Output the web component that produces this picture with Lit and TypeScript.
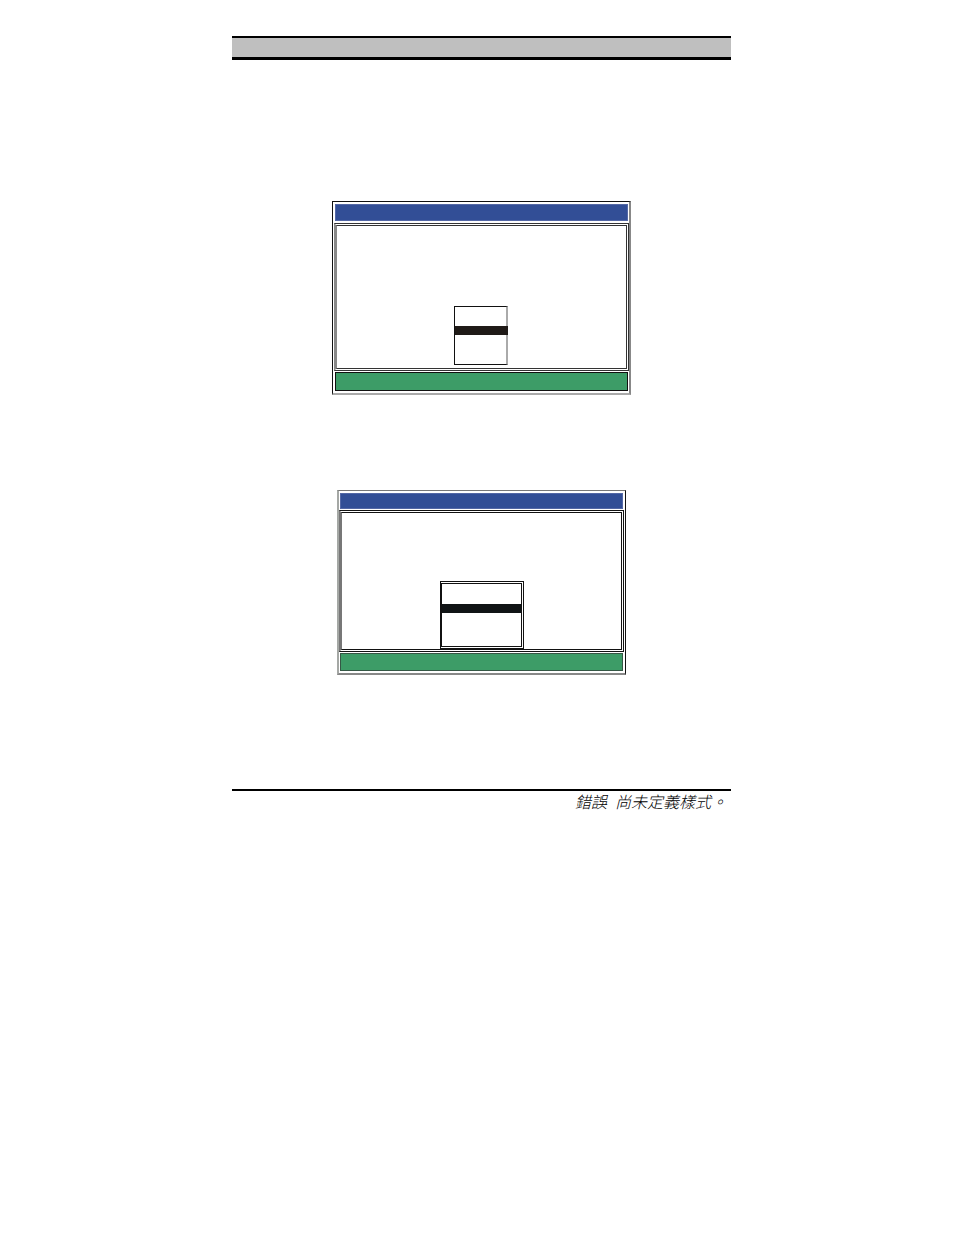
import { LitElement, html, css } from "lit";
import { customElement, property } from "lit/decorators.js";

@customElement("screen-figure")
class ScreenFigure extends LitElement {
  @property({ reflect: true }) variant = "main";

  static styles = css`
    :host {
      display: block;
      box-sizing: border-box;
      width: 60%;
      padding: 2px 0 2px 2px;
      border: 1px solid #111;
      border-right: 2px solid #888;
      border-bottom: 2px solid #aaa;
      background: #fff;
    }
    .title {
      height: 17px;
      box-sizing: border-box;
      margin-right: 1px;
      border: 1px solid #5468a6;
      background: #324e96;
    }
    .screen {
      box-sizing: border-box;
      height: 148px;
      margin: 2px 0 1px -1px;
      border: 3px double #333;
      border-left: 3px solid #888;
      display: flex;
      flex-direction: column;
      justify-content: flex-end;
      align-items: center;
      padding-bottom: 3px;
    }
    .menu {
      box-sizing: border-box;
      width: 54px;
      height: 59px;
      padding-top: 19px;
      border: 1px solid #111;
      border-right: 2px solid #aaa;
    }
    .selected {
      height: 9px;
      margin-right: -2px;
      background: #1f1a17;
    }
    .status {
      box-sizing: border-box;
      height: 19px;
      margin-right: 1px;
      border: 1px solid #111;
      background: #3d9c67;
    }
    :host([variant="sub"]) {
      width: 58%;
      padding: 2px 1px 2px 1px;
      border: 1px solid #111;
      border-top-color: #777;
      border-left: 2px solid #a5a8a5;
      border-bottom: 2px solid #888;
    }
    :host([variant="sub"]) .title {
      height: 16px;
    }
    :host([variant="sub"]) .screen {
      height: 142px;
      margin-top: 1px;
      border: 3px double #111;
      border-left: 3px solid #777;
      padding-bottom: 0;
    }
    :host([variant="sub"]) .menu {
      width: 84px;
      height: 68px;
      padding-top: 20px;
      border: 3px double #111;
      border-left: 2px solid #111;
    }
    :host([variant="sub"]) .selected {
      margin-right: 0;
      background: #101415;
    }
    :host([variant="sub"]) .status {
      height: 18px;
      border-color: #355745;
    }
  `;

  render() {
    return html`
      <div class="title"></div>
      <div class="screen">
        <div class="menu"><div class="selected"></div></div>
      </div>
      <div class="status"></div>
    `;
  }
}

@customElement("app-root")
class AppRoot extends LitElement {
  static styles = css`
    :host {
      display: block;
      min-height: 100vh;
      box-sizing: border-box;
      padding: 36px 223px 36px 232px;
      background: #fff;
      color: #000;
      font-family: "Noto Sans CJK TC", sans-serif;
    }
    header {
      height: 19px;
      border-top: 2px solid #000;
      border-bottom: 3px solid #000;
      background: #bfbfbf;
    }
    main {
      display: flex;
      flex-direction: column;
      align-items: center;
      gap: 95px;
      padding: 141px 0 114px;
    }
    footer {
      border-top: 2px solid #000;
      padding-right: 4px;
      text-align: right;
      font-size: 16px;
      line-height: 20px;
      font-style: italic;
      font-weight: 300;
      white-space: nowrap;
    }
  `;

  render() {
    return html`
      <header></header>
      <main>
        <screen-figure variant="main"></screen-figure>
        <screen-figure variant="sub"></screen-figure>
      </main>
      <footer>錯誤&ensp;尚未定義樣式。</footer>
    `;
  }
}
